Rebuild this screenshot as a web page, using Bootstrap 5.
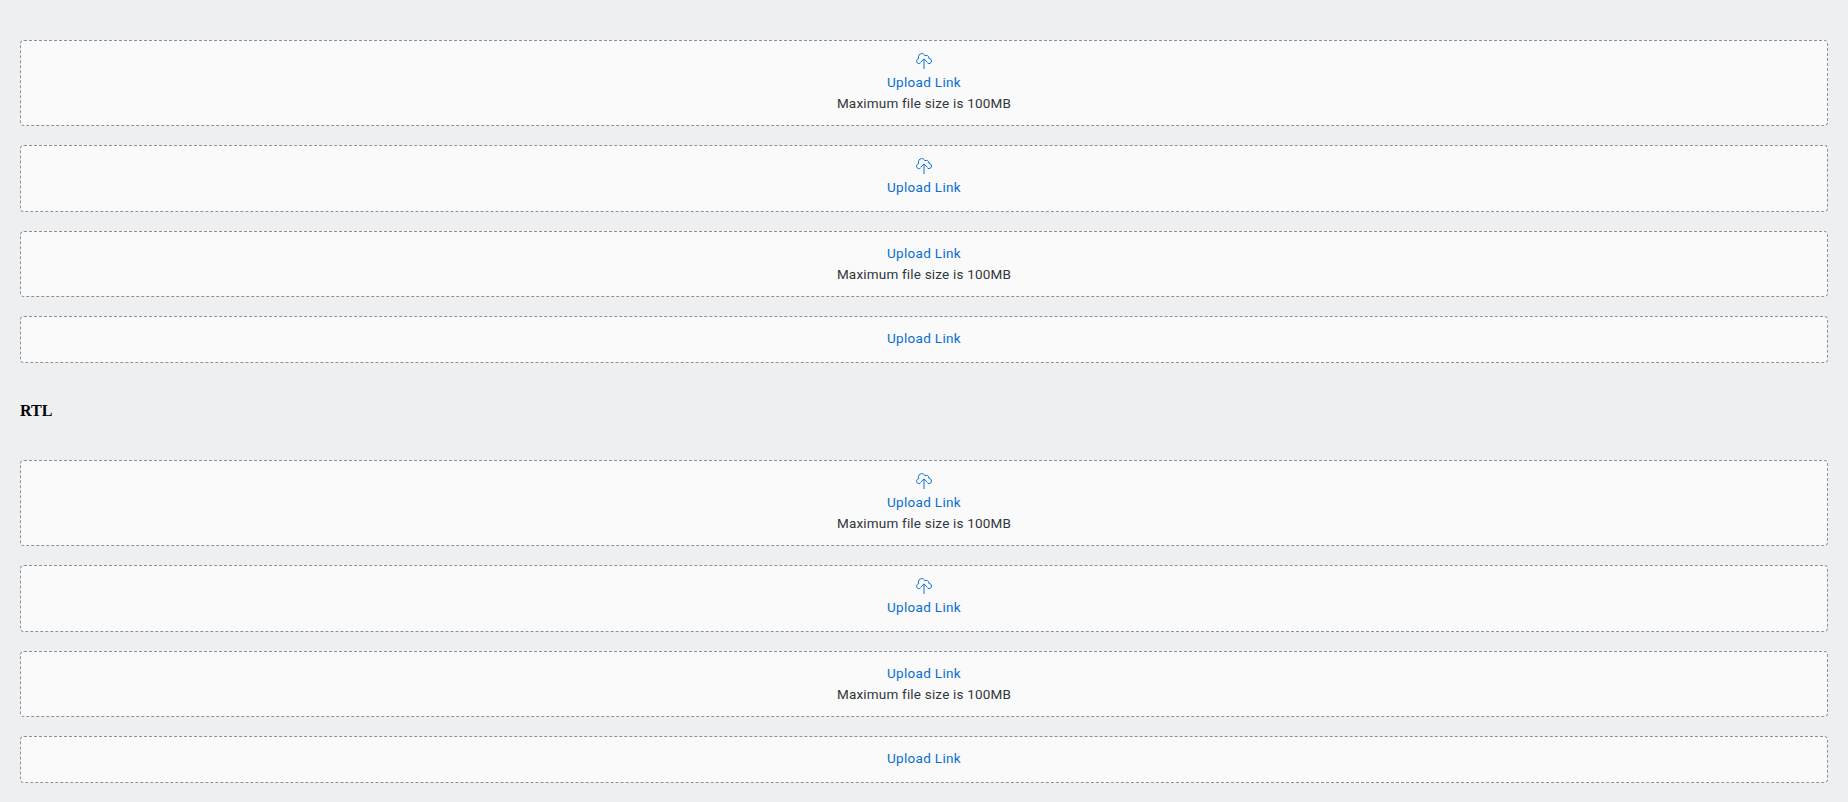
<!DOCTYPE html>
<html lang="en">
<head>
<meta charset="utf-8">
<meta name="viewport" content="width=device-width, initial-scale=1">
<title>Upload</title>
<link href="https://cdn.jsdelivr.net/npm/bootstrap@5.3.0/dist/css/bootstrap.min.css" rel="stylesheet">
<script src="https://cdn.jsdelivr.net/npm/bootstrap@5.3.0/dist/js/bootstrap.bundle.min.js"></script>
<style>
body{background:#edeff0;padding:40px 20px 19px;font:13.5px/21px Roboto,"Noto Sans",sans-serif;color:#32363a}
.stack{gap:19px}
.drop{border:1px dashed #89919a;border-radius:4px;background:#fafafa;height:67px;padding-top:11px}
.drop.full{height:86px}.drop.hinted{height:66px}.drop.short{height:47px}
.drop svg{width:16px;height:16px;margin:1px 0 3px;flex:none;fill:none;stroke:#0a6ed1;stroke-width:1}
.drop a{color:#0a6ed1;letter-spacing:.32px}
.drop span{letter-spacing:.19px}
.drop a,.drop span{white-space:nowrap}
h4{font:bold 16px/20px "Liberation Serif",serif;color:#000;margin:38px 0 39px}
</style>
</head>
<body>
<svg class="d-none"><symbol id="cloud" viewBox="0 0 16 16"><path d="M4.700 9.700C4.200 10.500 3.500 10.700 2.800 10.600 1.500 10.500.6 9.500.6 8.200c0-1.300.8-2.200 2-2.500C1.800 3 3.300.700 5.700.6c1.500 0 2.600.7 3.100 2.100C10.700 1.800 13.100 2.700 12.900 5.300c1.600.1 2.500 1.300 2.500 2.700 0 1.500-1 2.600-2.300 2.600-.8 0-1.400-.3-1.800-.9M4.900 9 8 5.900 11.100 9M8 6v10"/></symbol></svg>
<main>
<section class="stack d-flex flex-column">
<div class="drop full d-flex flex-column align-items-center"><svg><use href="#cloud"/></svg><a href="#" class="text-decoration-none">Upload Link</a><span>Maximum file size is 100MB</span></div>
<div class="drop d-flex flex-column align-items-center"><svg><use href="#cloud"/></svg><a href="#" class="text-decoration-none">Upload Link</a></div>
<div class="drop hinted d-flex flex-column align-items-center"><a href="#" class="text-decoration-none">Upload Link</a><span>Maximum file size is 100MB</span></div>
<div class="drop short d-flex flex-column align-items-center"><a href="#" class="text-decoration-none">Upload Link</a></div>
</section>
<h4>RTL</h4>
<section class="stack d-flex flex-column" dir="rtl">
<div class="drop full d-flex flex-column align-items-center"><svg><use href="#cloud"/></svg><a href="#" class="text-decoration-none">Upload Link</a><span>Maximum file size is 100MB</span></div>
<div class="drop d-flex flex-column align-items-center"><svg><use href="#cloud"/></svg><a href="#" class="text-decoration-none">Upload Link</a></div>
<div class="drop hinted d-flex flex-column align-items-center"><a href="#" class="text-decoration-none">Upload Link</a><span>Maximum file size is 100MB</span></div>
<div class="drop short d-flex flex-column align-items-center"><a href="#" class="text-decoration-none">Upload Link</a></div>
</section>
</main>
</body>
</html>
